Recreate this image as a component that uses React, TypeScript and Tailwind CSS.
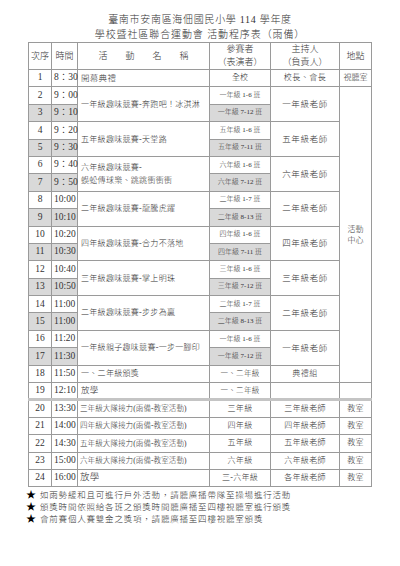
import React from "react";

const cell = "border border-[#9a9a9a] p-0";
const gray = "bg-[#d9d9d9]";

const pairs = [
  { n: [2, 3], t: ["9：00", "9：10"], act: "一年級趣味競賽-奔跑吧！冰淇淋", p: ["一年級 1-6 班", "一年級 7-12 班"], host: "一年級老師" },
  { n: [4, 5], t: ["9：20", "9：30"], act: "五年級趣味競賽-天堂路", p: ["五年級 1-6 班", "五年級 7-11 班"], host: "五年級老師" },
  { n: [6, 7], t: ["9：40", "9：50"], act: "六年級趣味競賽-\n蜈蚣傳球樂、跳跳衝衝衝", p: ["六年級 1-6 班", "六年級 7-12 班"], host: "六年級老師" },
  { n: [8, 9], t: ["10:00", "10:10"], act: "二年級趣味競賽-龍騰虎躍", p: ["二年級 1-7 班", "二年級 8-13 班"], host: "二年級老師" },
  { n: [10, 11], t: ["10:20", "10:30"], act: "四年級趣味競賽-合力不落地", p: ["四年級 1-6 班", "四年級 7-11 班"], host: "四年級老師" },
  { n: [12, 13], t: ["10:40", "10:50"], act: "三年級趣味競賽-掌上明珠", p: ["三年級 1-6 班", "三年級 7-12 班"], host: "三年級老師" },
  { n: [14, 15], t: ["11:00", "11:00"], act: "二年級趣味競賽-步步為贏", p: ["二年級 1-7 班", "二年級 8-13 班"], host: "二年級老師" },
  { n: [16, 17], t: ["11:20", "11:30"], act: "一年級親子趣味競賽-一步一腳印", p: ["一年級 1-6 班", "一年級 7-12 班"], host: "一年級老師" },
];

const relay = [
  { n: 20, t: "13:30", act: "三年級大隊接力(雨備-教室活動)", p: "三年級", host: "三年級老師" },
  { n: 21, t: "14:00", act: "四年級大隊接力(雨備-教室活動)", p: "四年級", host: "四年級老師" },
  { n: 22, t: "14:30", act: "五年級大隊接力(雨備-教室活動)", p: "五年級", host: "五年級老師" },
  { n: 23, t: "15:00", act: "六年級大隊接力(雨備-教室活動)", p: "六年級", host: "六年級老師" },
];

const notes = [
  "如雨勢緩和且可進行戶外活動，請聽廣播帶隊至操場進行活動",
  "頒獎時間依照給各班之頒獎時間聽廣播至四樓視聽室進行頒獎",
  "會前賽個人賽雙金之獎項，請聽廣播至四樓視聽室頒獎",
];

const Num = ({ v, g }: { v: number; g?: boolean }) => (
  <td className={`${cell} leading-none text-center text-[9.5px] ${g ? gray : ""}`}>{v}</td>
);
const Time = ({ v, g }: { v: string; g?: boolean }) => (
  <td className={`${cell} leading-none pl-[2px] text-left text-[9.5px] whitespace-nowrap ${g ? gray : ""}`}>{v}</td>
);

export default function App() {
  return (
    <div
      className="w-[400px] h-[566px] bg-white text-[#333] font-light overflow-hidden"
      style={{ fontFamily: '"Liberation Serif", "Noto Sans CJK TC", serif' }}
    >
      <div className="pt-[12px] text-center text-[10px] leading-[15px] tracking-[0.7px]">
        <div>臺南市安南區海佃國民小學 114 學年度</div>
        <div className="tracking-[0.9px]">學校暨社區聯合運動會 活動程序表（雨備）</div>
      </div>

      <table className="ml-[28px] w-[343px] table-fixed border-collapse border border-[#8a8a8a] leading-none">
        <colgroup>
          <col className="w-[23px]" />
          <col className="w-[26px]" />
          <col className="w-[132px]" />
          <col className="w-[61px]" />
          <col className="w-[69px]" />
          <col className="w-[32px]" />
        </colgroup>
        <tbody>
          <tr className="h-[26px] text-[9px]">
            <td className={`${cell} text-center`}>次序</td>
            <td className={`${cell} text-center`}>時間</td>
            <td className={`${cell} text-center tracking-[18px] pl-[18px]`}>活動名稱</td>
            <td className={`${cell} text-center leading-[13px]`}>參賽者<br />（表演者）</td>
            <td className={`${cell} text-center leading-[13px]`}>主持人<br />（負責人）</td>
            <td className={`${cell} text-center`}>地點</td>
          </tr>

          <tr className="h-[17.4px]">
            <Num v={1} />
            <Time v="8：30" />
            <td className={`${cell} pl-[3px] text-[8.5px] tracking-[0.3px]`}>開幕典禮</td>
            <td className={`${cell} text-center text-[8px]`}>全校</td>
            <td className={`${cell} text-center text-[8px] tracking-[0.5px]`}>校長、會長</td>
            <td className={`${cell} text-center text-[8px]`}>視聽室</td>
          </tr>

          {pairs.map((r, i) => (
            <React.Fragment key={i}>
              <tr className="h-[17.4px]">
                <Num v={r.n[0]} />
                <Time v={r.t[0]} />
                <td rowSpan={2} className={`${cell} pl-[3px] text-[8px] tracking-[0.3px] leading-[13px] whitespace-pre-line`}>
                  {r.act}
                </td>
                <td className={`${cell} text-center text-[7px]`}>{r.p[0]}</td>
                <td rowSpan={2} className={`${cell} text-center text-[8.5px] tracking-[0.6px]`}>{r.host}</td>
                {i === 0 && (
                  <td rowSpan={17} className={`${cell} text-center text-[8px] leading-[11px]`}>
                    活動<br />中心
                  </td>
                )}
              </tr>
              <tr className="h-[17.4px]">
                <Num v={r.n[1]} g />
                <Time v={r.t[1]} g />
                <td className={`${cell} ${gray} text-center text-[7px]`}>{r.p[1]}</td>
              </tr>
            </React.Fragment>
          ))}

          <tr className="h-[17.4px]">
            <Num v={18} />
            <Time v="11:50" />
            <td className={`${cell} pl-[3px] text-[8px] tracking-[0.3px]`}>一、二年級頒獎</td>
            <td className={`${cell} text-center text-[7.5px] tracking-[0.3px]`}>一、二年級</td>
            <td className={`${cell} text-center text-[8px] tracking-[0.5px]`}>典禮組</td>
          </tr>
          <tr className="h-[17.4px] border-b-[3px] border-b-[#c4c4c4]">
            <Num v={19} />
            <Time v="12:10" />
            <td className={`${cell} pl-[3px] text-[8.5px] tracking-[0.3px]`}>放學</td>
            <td className={`${cell} text-center text-[7.5px] tracking-[0.3px]`}>一、二年級</td>
            <td className={cell}></td>
            <td className={cell}></td>
          </tr>

          {relay.map((r) => (
            <tr key={r.n} className="h-[17.4px]">
              <Num v={r.n} />
              <Time v={r.t} />
              <td className={`${cell} pl-[2px] text-[7.5px] tracking-[0.1px] whitespace-nowrap`}>{r.act}</td>
              <td className={`${cell} text-center text-[8px] tracking-[0.3px]`}>{r.p}</td>
              <td className={`${cell} text-center text-[8px] tracking-[0.3px]`}>{r.host}</td>
              <td className={`${cell} text-center text-[8px] tracking-[0.3px]`}>教室</td>
            </tr>
          ))}
          <tr className="h-[17.4px]">
            <Num v={24} />
            <Time v="16:00" />
            <td className={`${cell} pl-[2px] text-[9.5px] tracking-[0.3px]`}>放學</td>
            <td className={`${cell} text-center text-[8px] tracking-[0.3px]`}>三-六年級</td>
            <td className={`${cell} text-center text-[8px] tracking-[0.3px]`}>各年級老師</td>
            <td className={`${cell} text-center text-[8px] tracking-[0.3px]`}>教室</td>
          </tr>
        </tbody>
      </table>

      <div className="mt-[2px] ml-[26px] flex flex-col text-[8.5px] leading-[12px] tracking-[0.8px]">
        {notes.map((n) => (
          <div key={n} className="flex items-center gap-[4px]">
            <span className="w-[10px] text-[10px] text-black">★</span>
            <span>{n}</span>
          </div>
        ))}
      </div>
    </div>
  );
}
